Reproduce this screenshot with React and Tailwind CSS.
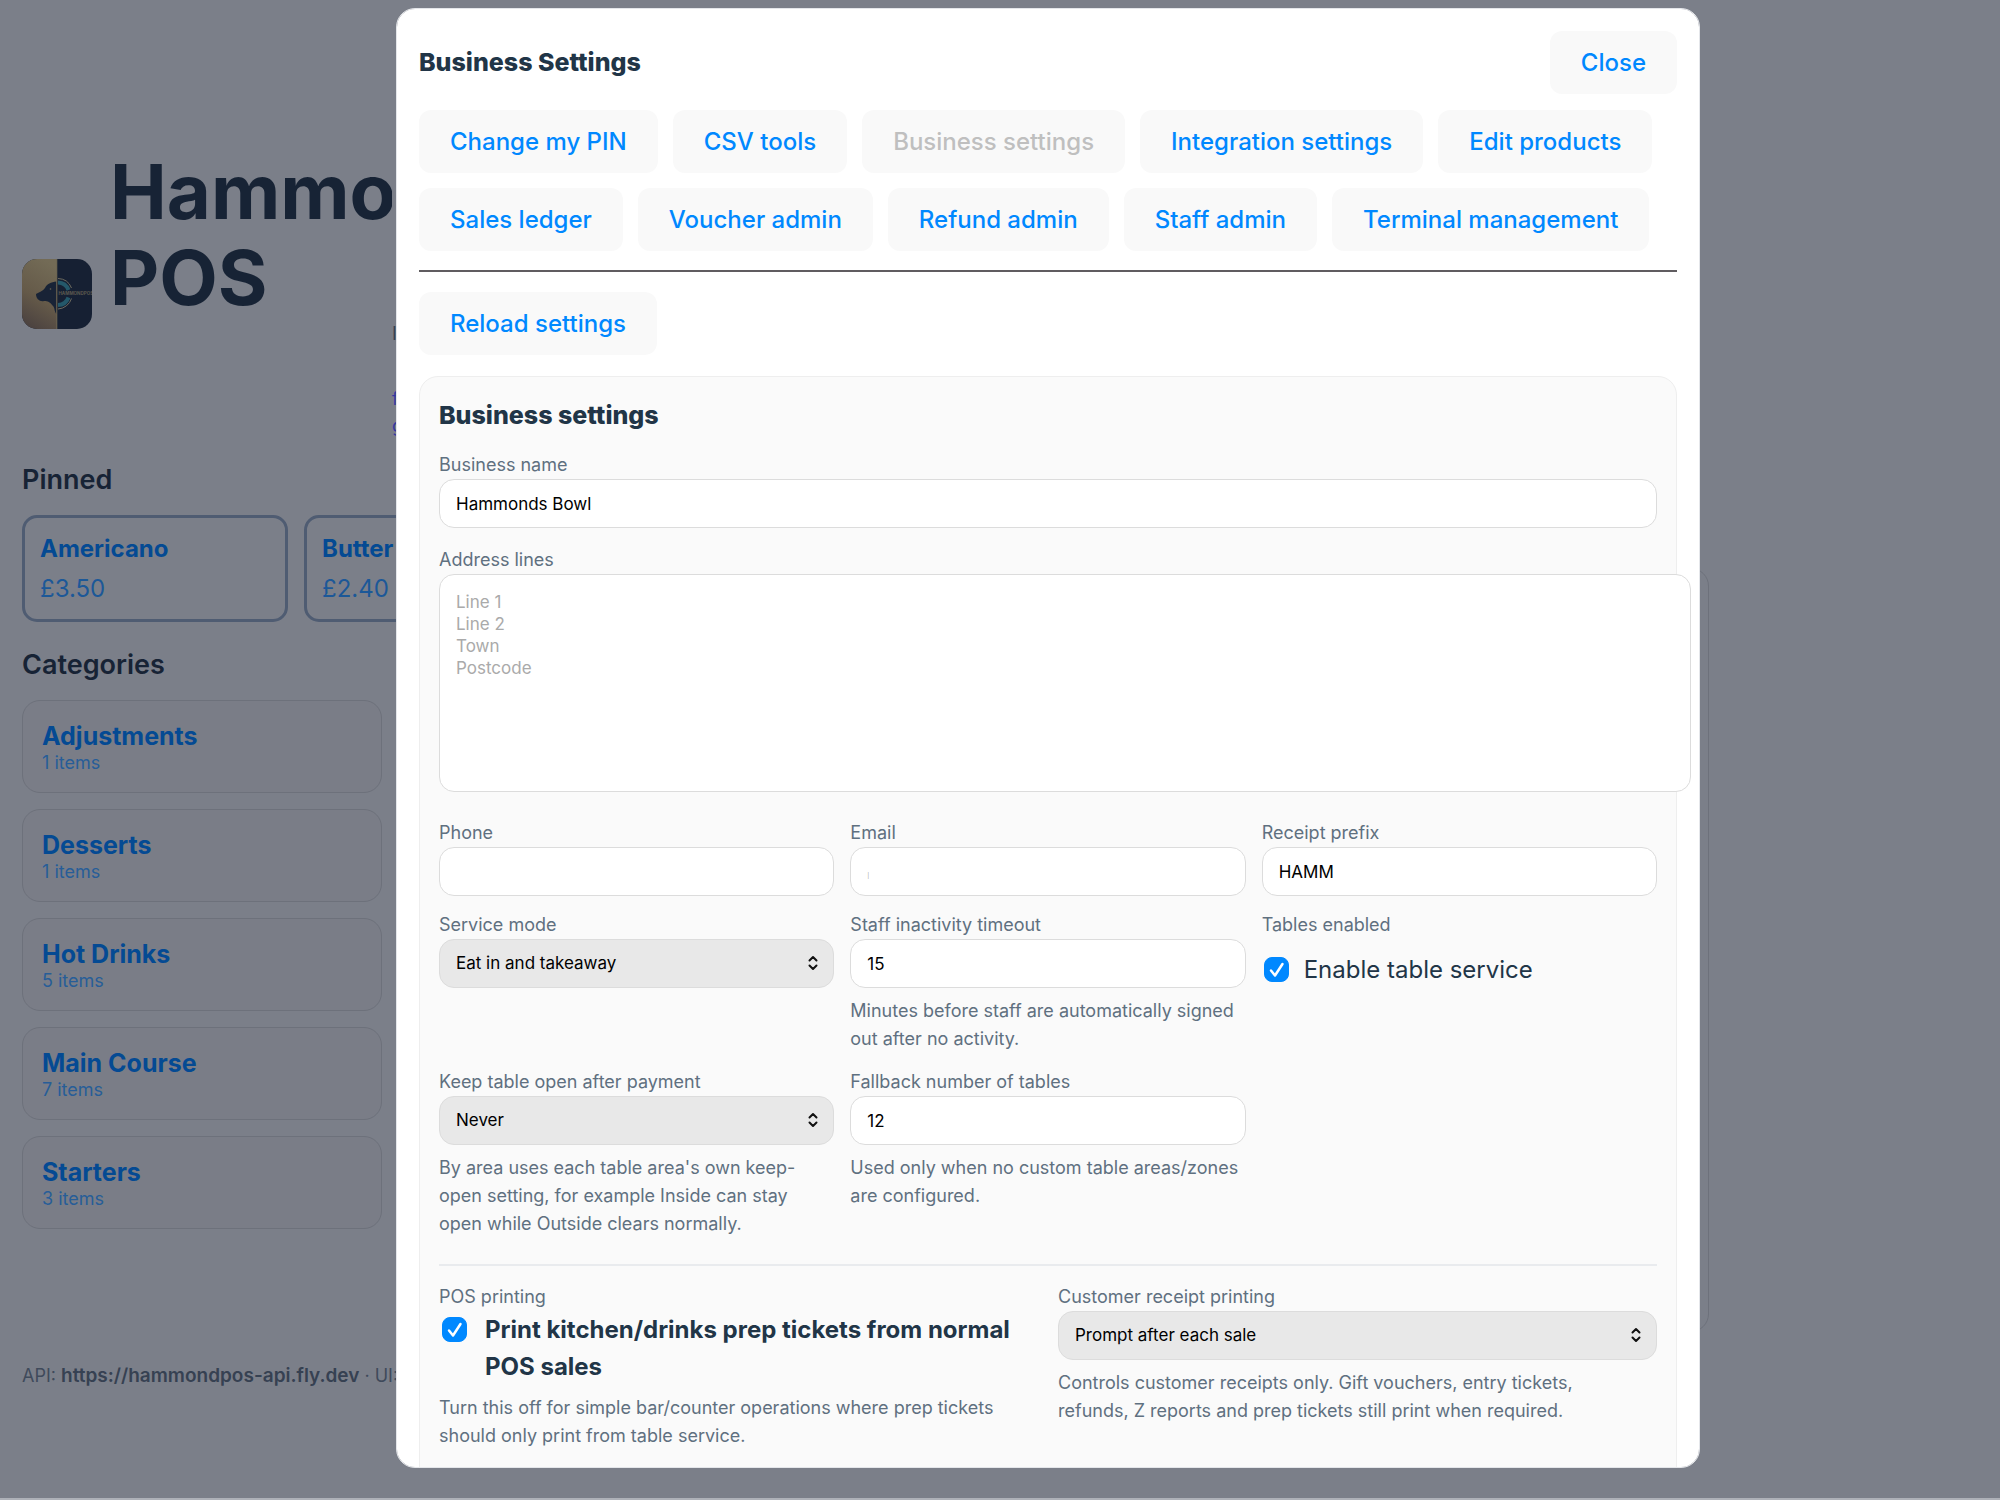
import React from "react";

const pageFont = 'font-[Inter,"Noto_Sans",sans-serif]';

const categories = [
  { name: "Adjustments", items: "1 items" },
  { name: "Desserts", items: "1 items" },
  { name: "Hot Drinks", items: "5 items" },
  { name: "Main Course", items: "7 items" },
  { name: "Starters", items: "3 items" },
];

const pinned = [
  { name: "Americano", price: "£3.50" },
  { name: "Butter", price: "£2.40" },
];

const tabs = [
  "Change my PIN",
  "CSV tools",
  "Business settings",
  "Integration settings",
  "Edit products",
  "Sales ledger",
  "Voucher admin",
  "Refund admin",
  "Staff admin",
  "Terminal management",
];

function Logo() {
  return (
    <svg viewBox="0 0 70 70" className="mt-[111px] size-[70px] shrink-0" role="img" aria-label="HammondPOS">
      <defs>
        <linearGradient id="gold" x1="0.6" y1="0" x2="0.3" y2="1">
          <stop offset="0" stopColor="#736b56" />
          <stop offset="0.55" stopColor="#655a49" />
          <stop offset="1" stopColor="#4b4240" />
        </linearGradient>
        <clipPath id="tile">
          <rect width="70" height="70" rx="15" />
        </clipPath>
      </defs>
      <g clipPath="url(#tile)">
        <rect width="70" height="70" fill="#162033" />
        <rect width="35" height="70" fill="url(#gold)" />
        <path d="M14 35 C17 33 21 32 23 29 C25 25 29 23 34.500 22.500 V55 C32 52 33 49 31 47 C28 43 26 42 22 42 C18 43 14 40 14 35 Z" fill="#182336" />
        <circle cx="28.500" cy="30" r="0.8" fill="#6d6554" />
        <rect x="34.300" width="1" height="70" fill="#6b6452" />
        <path d="M36 23.500 A11.500 11.500 0 0 1 46.500 31 M46.500 38.500 A11.500 11.500 0 0 1 36 46" fill="none" stroke="#24586a" strokeWidth="4" />
        <path d="M36 19.500 A15 15 0 0 1 49.500 29 M49.500 39.500 A15 15 0 0 1 36 50" fill="none" stroke="#6d6a5f" strokeWidth="1" />
        <text x="36.500" y="36" fontSize="4.500" fontWeight="700" fontFamily="Inter, sans-serif" fill="#5c5a50">
          HAMMONDPOS
        </text>
      </g>
    </svg>
  );
}

function Page() {
  return (
    <div className="pl-[22px] pr-[291px]">
      <header className="flex h-[461px] pt-[148px]">
        <Logo />
        <h1 className="ml-[18px] w-[282px] shrink-0 overflow-hidden whitespace-nowrap text-[76px] font-bold leading-[86px] text-[#172335]">
          Hammond
          <br />
          POS
        </h1>
        <div className="flex flex-col pt-[172px] text-[18px] leading-[27px] text-[#364152]">
          <span>I</span>
          <a href="#f" className="mt-[38px] text-[#3538a0]">f</a>
          <a href="#g" className="text-[#3538a0]">g</a>
        </div>
      </header>
      <div className="flex gap-4">
        <div className="w-[360px] shrink-0">
          <h2 className="text-[27px] font-semibold leading-[38px] text-[#172335]">Pinned</h2>
          <div className="mt-4 flex gap-4">
            {pinned.map((p) => (
              <button
                key={p.name}
                type="button"
                className="h-[107px] w-[266px] shrink-0 rounded-[15px] border-[3px] border-[#4f5c72] px-[15px] text-left text-[24px] text-[#1c5898]"
              >
                <span className="block font-bold leading-[40px] text-[#044a93]">{p.name}</span>
                <span className="block leading-[40px]">{p.price}</span>
              </button>
            ))}
          </div>
          <h2 className="mt-6 text-[27px] font-semibold leading-[38px] text-[#172335]">Categories</h2>
          <div className="mt-4 flex flex-col gap-4">
            {categories.map((c) => (
              <button
                key={c.name}
                type="button"
                className="h-[93px] w-full rounded-[18px] border border-[#6d717b] bg-[#7a7d87] px-[19px] pt-1 text-left"
              >
                <span className="block text-[25px] font-bold leading-[28px] text-[#044a93]">{c.name}</span>
                <span className="block text-[18px] leading-[26px] text-[#275d98]">{c.items}</span>
              </button>
            ))}
          </div>
        </div>
        <section className="mt-[107px] h-[764px] flex-1 rounded-[18px] border border-[#6d717b]" />
      </div>
      <footer className="mt-[30px] text-[18px] leading-[28px] text-[#3f4a5b]">
        API: <strong className="text-[19px] font-semibold text-[#364152]">https://hammondpos-api.fly.dev</strong> · UI:
      </footer>
    </div>
  );
}

function SoftButton({ children, disabled }) {
  return (
    <button
      type="button"
      disabled={disabled}
      className="h-[63px] rounded-xl bg-[#f9f9f9] px-[31px] text-[24px] font-medium text-[#0088ff] disabled:text-[#bfbfbf]"
    >
      {children}
    </button>
  );
}

const control =
  "h-[49px] w-full rounded-[15px] border border-[#dcdcdc] px-4 text-[17px] text-black";

function Label({ id, children }) {
  return (
    <label htmlFor={id} className="block text-[18px] leading-[28px] text-[#5f7080]">
      {children}
    </label>
  );
}

function Help({ children }) {
  return <p className="mt-[9px] text-[18px] leading-[28px] text-[#5f7080]">{children}</p>;
}

function Input({ id, label, help, ...rest }) {
  return (
    <div>
      <Label id={id}>{label}</Label>
      <input id={id} className={control + " bg-white placeholder:text-[6px] placeholder:text-[#a0a0a0]"} {...rest} />
      {help && <Help>{help}</Help>}
    </div>
  );
}

function Select({ id, label, help, value }) {
  return (
    <div>
      <Label id={id}>{label}</Label>
      <div className="relative">
        <select id={id} defaultValue={value} className={control + " appearance-none bg-[#e8e8e8]"}>
          <option>{value}</option>
        </select>
        <svg
          viewBox="0 0 12 16"
          className="pointer-events-none absolute right-[15px] top-[16px] h-4 w-3"
          fill="none"
          stroke="#111"
          strokeWidth="2"
          strokeLinecap="round"
          strokeLinejoin="round"
        >
          <path d="M2.500 5.500 6 2l3.500 3.500M2.500 10.500 6 14l3.500-3.500" />
        </svg>
      </div>
      {help && <Help>{help}</Help>}
    </div>
  );
}

function Checkbox({ id }) {
  return (
    <span className="relative inline-flex size-[25px] shrink-0">
      <input id={id} type="checkbox" defaultChecked className="peer size-full appearance-none rounded-lg border border-[#ccc] bg-white checked:border-[#0088ff] checked:bg-[#0088ff]" />
      <svg
        viewBox="0 0 25 25"
        className="pointer-events-none absolute inset-0 hidden peer-checked:block"
        fill="none"
        stroke="white"
        strokeWidth="2.500"
        strokeLinecap="round"
        strokeLinejoin="round"
      >
        <path d="M7 13.500 11 18.500 18.500 7" />
      </svg>
    </span>
  );
}

function Dialog() {
  return (
    <div
      role="dialog"
      aria-labelledby="dialog-title"
      className="min-w-0 flex-1 overflow-y-auto overflow-x-hidden rounded-[19px] border border-[#e4e6ea] bg-white px-[22px] pt-[22px] [scrollbar-width:none]"
    >
      <header className="flex items-center justify-between">
        <h2 id="dialog-title" className="text-[25px] font-extrabold text-[#213547]">Business Settings</h2>
        <SoftButton>Close</SoftButton>
      </header>
      <nav className="mt-4 flex flex-wrap gap-x-[15px] gap-y-[15px]">
        {tabs.map((t) => (
          <SoftButton key={t} disabled={t === "Business settings"}>{t}</SoftButton>
        ))}
      </nav>
      <hr className="mb-5 mt-[19px] border-t-2 border-[#605c60]" />
      <SoftButton>Reload settings</SoftButton>

      <section className="mt-[21px] rounded-[19px] border border-[#eeeeee] bg-[#fafafa] px-[19px] pb-10 pt-[19px]">
        <h3 className="text-[25px] font-extrabold leading-[38px] text-[#213547]">Business settings</h3>
        <div className="mt-[17px]">
          <Input id="name" label="Business name" defaultValue="Hammonds Bowl" />
        </div>
        <div className="mt-[18px]">
          <Label id="address">Address lines</Label>
          <textarea
            id="address"
            placeholder={"Line 1\nLine 2\nTown\nPostcode"}
            className="box-content block h-[184px] w-full resize-none rounded-[15px] border border-[#dcdcdc] bg-white px-4 py-4 text-[17px] leading-[22px] placeholder:text-[#aaaaaa]"
          />
        </div>
        <div className="mt-[27px] grid grid-cols-3 gap-x-4 gap-y-[15px]">
          <Input id="phone" label="Phone" />
          <Input id="email" label="Email" placeholder="|" />
          <Input id="prefix" label="Receipt prefix" defaultValue="HAMM" />
          <Select id="mode" label="Service mode" value="Eat in and takeaway" />
          <Input id="timeout" label="Staff inactivity timeout" defaultValue="15" help="Minutes before staff are automatically signed out after no activity." />
          <div>
            <span className="block text-[18px] leading-[28px] text-[#5f7080]">Tables enabled</span>
            <div className="mt-3 flex items-center gap-[15px] pl-[2px]">
              <Checkbox id="tables" />
              <label htmlFor="tables" className="text-[24px] leading-[37px] text-[#213547]">Enable table service</label>
            </div>
          </div>
          <Select id="keep" label="Keep table open after payment" value="Never" help="By area uses each table area's own keep-open setting, for example Inside can stay open while Outside clears normally." />
          <Input id="fallback" label="Fallback number of tables" defaultValue="12" help="Used only when no custom table areas/zones are configured." />
        </div>
        <div className="mt-[26px] grid grid-cols-2 gap-5 border-t-2 border-[#e9ebee] pt-[17px]">
          <div>
            <span className="block text-[18px] leading-[28px] text-[#5f7080]">POS printing</span>
            <div className="flex gap-[18px] pl-[3px]">
              <span className="mt-[6px] flex"><Checkbox id="prep" /></span>
              <label htmlFor="prep" className="text-[24px] font-bold leading-[37px] text-[#213547]">
                Print kitchen/drinks prep tickets from normal POS sales
              </label>
            </div>
            <Help>Turn this off for simple bar/counter operations where prep tickets should only print from table service.</Help>
          </div>
          <Select
            id="receipt"
            label="Customer receipt printing"
            value="Prompt after each sale"
            help={<span className="block pr-6">Controls customer receipts only. Gift vouchers, entry tickets, refunds, Z reports and prep tickets still print when required.</span>}
          />
        </div>
      </section>
    </div>
  );
}

export default function App() {
  return (
    <div className={pageFont + " relative h-screen overflow-hidden border-b-2 border-[#aeb1b8] bg-[#7b7f89]"}>
      <Page />
      <div className="fixed inset-0 flex pb-[32px] pl-[396px] pr-[300px] pt-2">
        <Dialog />
      </div>
    </div>
  );
}
